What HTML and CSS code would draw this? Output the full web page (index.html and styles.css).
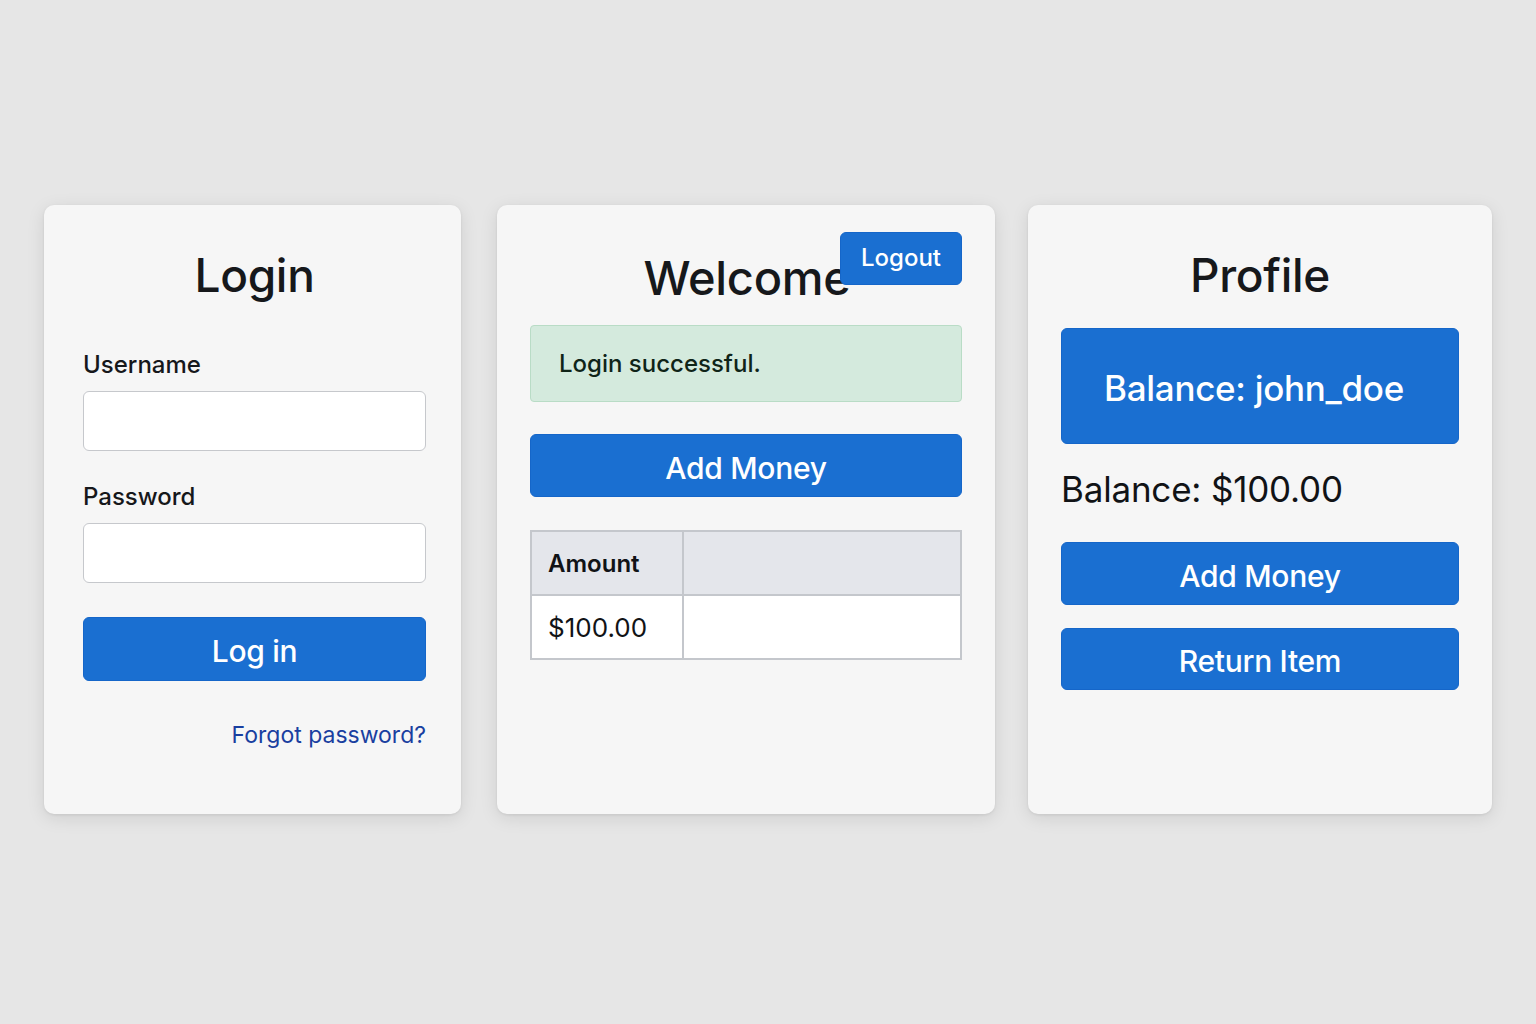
FILE: index.html
```html
<!DOCTYPE html>
<html lang="en">
<head>
<meta charset="utf-8">
<title>Bank UI</title>
<link rel="stylesheet" href="styles.css">
</head>
<body>
<main class="stage">
  <section class="card card-login">
    <h1 class="title">Login</h1>
    <label class="label label-first" for="u">Username</label>
    <input class="input" id="u" type="text">
    <label class="label label-second" for="p">Password</label>
    <input class="input" id="p" type="password">
    <button class="btn btn-login">Log in</button>
    <a class="forgot" href="#">Forgot password?</a>
  </section>

  <section class="card card-welcome">
    <button class="btn-logout">Logout</button>
    <h1 class="title title-welcome">Welcome</h1>
    <div class="alert">Login successful.</div>
    <button class="btn btn-add">Add Money</button>
    <table class="table">
      <thead>
        <tr><th class="col-amount">Amount</th><th></th></tr>
      </thead>
      <tbody>
        <tr><td>$100.00</td><td></td></tr>
      </tbody>
    </table>
  </section>

  <section class="card card-profile">
    <h1 class="title">Profile</h1>
    <div class="balance-box">Balance: john_doe</div>
    <p class="balance">Balance: $100.00</p>
    <button class="btn btn-add2">Add Money</button>
    <button class="btn btn-return">Return Item</button>
  </section>
</main>
</body>
</html>
```

FILE: styles.css
```css
* { box-sizing: border-box; }

html, body {
  margin: 0;
  padding: 0;
  background: #e6e6e6;
  font-family: "Inter", "Liberation Sans", sans-serif;
  color: #16181b;
}

.stage {
  display: flex;
  align-items: flex-start;
  padding: 205px 0 0 44px;
  height: 1024px;
}

.card {
  position: relative;
  display: flex;
  flex-direction: column;
  background: #f6f6f6;
  border-radius: 10px;
  box-shadow: 0 4px 18px rgba(0, 0, 0, 0.10), 0 1px 3px rgba(0, 0, 0, 0.08);
  height: 609px;
  padding: 43px 33px 0 33px;
}

.card-login { width: 417px; padding-left: 39px; padding-right: 35px; }
.card-welcome { width: 498px; margin-left: 36px; }
.card-profile { width: 464px; margin-left: 33px; }

.title {
  margin: 0;
  text-align: center;
  font-size: 46px;
  line-height: 55px;
  font-weight: 500;
  letter-spacing: -0.3px;
  color: #16181b;
}

.title-welcome {
  font-size: 47px;
  line-height: 60px;
  padding-left: 2px;
}

.label {
  display: block;
  font-size: 24px;
  line-height: 29px;
  font-weight: 550;
  color: #16181b;
}
.label-first { margin-top: 47px; }
.label-second { margin-top: 31px; }

.input {
  display: block;
  width: 100%;
  height: 60px;
  margin-top: 12px;
  background: #ffffff;
  border: 1px solid #c6c8cc;
  border-radius: 6px;
  font-size: 22px;
  padding: 0 14px;
}

.btn {
  display: block;
  width: 100%;
  height: 64px;
  border: 1px solid #1566c9;
  border-radius: 6px;
  background: #1a6fd1;
  color: #ffffff;
  font-family: inherit;
  font-size: 30px;
  font-weight: 500;
  letter-spacing: -0.3px;
  padding: 4px 0 0 0;
}

.btn-login { margin-top: 34px; }

.forgot {
  margin-top: 40px;
  align-self: flex-end;
  font-size: 23px;
  line-height: 29px;
  color: #1a3fa0;
  text-decoration: none;
}

.btn-logout {
  position: absolute;
  top: 27px;
  right: 33px;
  width: 122px;
  height: 53px;
  border: 1px solid #1566c9;
  border-radius: 6px;
  background: #1a6fd1;
  color: #ffffff;
  font-family: inherit;
  font-size: 24px;
  font-weight: 500;
  padding: 0 0 2px 0;
}

.alert {
  margin-top: 17px;
  height: 77px;
  display: flex;
  align-items: center;
  padding-left: 28px;
  background: #d4eadd;
  border: 1px solid #b9dcc6;
  border-radius: 4px;
  font-size: 24px;
  font-weight: 550;
  color: #0f2418;
}

.btn-add { margin-top: 32px; height: 63px; }

.table {
  margin-top: 33px;
  width: 100%;
  border-collapse: collapse;
  border: 2px solid #c4c7cc;
}
.table th, .table td {
  border: 2px solid #c4c7cc;
  text-align: left;
  padding: 0 0 0 16px;
  height: 64px;
}
.table th {
  background: #e4e6eb;
  font-size: 24px;
  font-weight: 600;
  color: #111316;
}
.table td {
  background: #ffffff;
  font-size: 26px;
  font-weight: 400;
  color: #111316;
}
.col-amount { width: 152px; }

.balance-box {
  margin-top: 25px;
  height: 116px;
  display: flex;
  align-items: center;
  justify-content: center;
  padding: 4px 12px 0 0;
  background: #1a6fd1;
  border: 1px solid #1566c9;
  border-radius: 6px;
  color: #ffffff;
  font-size: 35px;
  font-weight: 500;
  letter-spacing: -0.3px;
}

.balance {
  margin: 24px 0 0 0;
  font-size: 35px;
  line-height: 43px;
  font-weight: 400;
  letter-spacing: -0.2px;
  color: #111316;
}

.btn-add2 { margin-top: 31px; height: 63px; }
.btn-return { margin-top: 23px; height: 62px; }
```
